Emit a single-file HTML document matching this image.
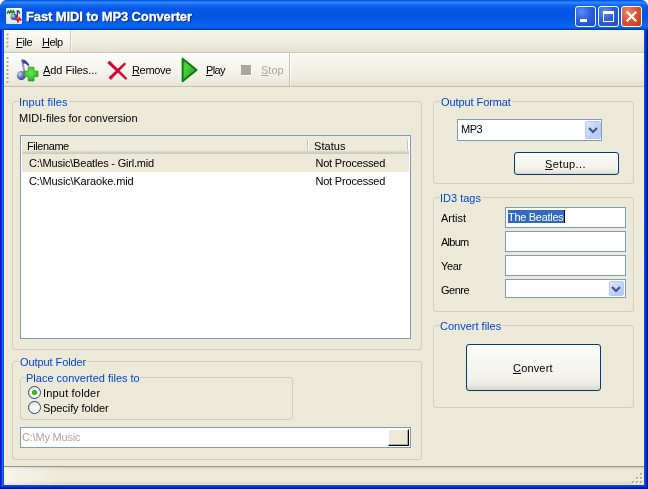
<!DOCTYPE html>
<html>
<head>
<meta charset="utf-8">
<style>
html,body{margin:0;padding:0;}
body{width:648px;height:489px;overflow:hidden;background:#fff;font-family:"Liberation Sans",sans-serif;font-size:11px;color:#000;position:relative;}
.abs{position:absolute;}
#win{position:absolute;left:0;top:0;width:648px;height:489px;background:#0A3FE0;overflow:hidden;border-radius:7px 7px 0 0;}
#title{position:absolute;left:0;top:0;width:648px;height:30px;
 background:linear-gradient(to bottom,#0855DD 0%,#0A5CE8 3%,#2E8AFC 7%,#2A84F8 10%,#1268EE 17%,#0659E6 27%,#0456E2 40%,#0456E2 58%,#065BE8 70%,#0964F2 84%,#0A64F2 92%,#0548CC 96%,#0238B0 100%);
 border-radius:7px 7px 0 0;}
#titletext{position:absolute;left:27px;top:9px;color:#fff;font-weight:bold;font-size:13px;line-height:16px;white-space:nowrap;text-shadow:1px 1px 0 #0A1F80;-webkit-text-stroke:0.3px #fff;letter-spacing:-0.120px;margin-left:-1px;}
#client{position:absolute;left:4px;top:30px;width:640px;height:455px;background:#ECE9D8;}
.tbtn{position:absolute;top:6px;width:21px;height:21px;border-radius:3px;border:1px solid #fff;box-sizing:border-box;}
.tb-blue{background:radial-gradient(circle at 30% 25%,#5C8DF2 0%,#2C5FE0 45%,#1E4ACB 100%);}
.tb-red{background:radial-gradient(circle at 30% 25%,#EE8866 0%,#DD5530 45%,#C4381B 100%);}
.t{position:absolute;white-space:nowrap;line-height:13px;font-size:11px;}
#win{will-change:transform;}
u{text-decoration:underline;text-underline-offset:1px;text-decoration-thickness:1px;}
.group{position:absolute;border:1px solid #D0D0BF;border-radius:3px;box-sizing:border-box;}
.glabel{position:absolute;background:#ECE9D8;color:#0046D5;white-space:nowrap;line-height:13px;font-size:11px;box-sizing:border-box;padding-left:2px;overflow:visible;}
.edit{position:absolute;border:1px solid #7F9DB9;background:#fff;box-sizing:border-box;}
.btn{position:absolute;box-sizing:border-box;border:1px solid #003C74;border-radius:3px;background:linear-gradient(to bottom,#FFFFFF 0%,#FAFAF7 12%,#F3F2EC 70%,#ECEAE2 88%,#DAD5CA 100%);}
.cbtn{position:absolute;border-radius:2px;background:linear-gradient(135deg,#DCE6FD 0%,#C6D4FB 45%,#B4C7F7 100%);border:1px solid #B7C8F5;box-sizing:border-box;}
.radio{position:absolute;width:13px;height:13px;border-radius:50%;box-sizing:border-box;border:1px solid #21497C;background:radial-gradient(circle at 65% 65%,#FFFFFF 0%,#F3F3EE 45%,#DCDCD4 100%);}
</style>
</head>
<body>
<div id="win">
 <div id="title">
  <svg class="abs" style="left:6px;top:8px" width="16" height="16" viewBox="0 0 16 16">
   <defs><radialGradient id="ih" cx="35%" cy="35%" r="70%"><stop offset="0" stop-color="#C8CEF0"/><stop offset="0.5" stop-color="#6870A8"/><stop offset="1" stop-color="#2C3470"/></radialGradient>
   <linearGradient id="ib" x1="0" y1="0" x2="0" y2="1"><stop offset="0" stop-color="#FAFBFE"/><stop offset="1" stop-color="#DDE5F2"/></linearGradient></defs>
   <rect x="0" y="0" width="16" height="16" rx="1" fill="url(#ib)"/>
   <path d="M0.8 5.6 L2.4 3 L3.6 5.4 L5 2.4 L6.2 5 L7.4 2.6 L8.8 5.4" stroke="#188A2C" stroke-width="1.5" fill="none" stroke-linejoin="round"/>
   <path d="M11.4 2.4 L11.4 9.4" stroke="#39417E" stroke-width="1.5" fill="none"/>
   <path d="M10.6 2 L12.2 2 C13.2 3 14.2 4 14.4 5.6 L13.6 6 C13.2 5 12.6 4.4 11.6 4.2 Z" fill="#39417E"/>
   <circle cx="7.8" cy="8.8" r="3.3" fill="url(#ih)"/>
   <path d="M9.6 12.4 L10.8 10 L12 14.2 L13.2 9.4 L14.4 12.4 L15.2 10.8" stroke="#D22318" stroke-width="1.4" fill="none" stroke-linejoin="round"/>
  </svg>
  <div id="titletext">Fast MIDI to MP3 Converter</div>
  <div class="tbtn tb-blue" style="left:575px"><div class="abs" style="left:4px;top:12px;width:7px;height:3px;background:#fff"></div></div>
  <div class="tbtn tb-blue" style="left:598px"><div class="abs" style="left:4px;top:4px;width:11px;height:11px;box-sizing:border-box;border:1px solid #fff;border-top:3px solid #fff"></div></div>
  <div class="tbtn tb-red" style="left:621px">
   <svg class="abs" style="left:0;top:0" width="19" height="19" viewBox="0 0 19 19"><path d="M5.5 5.5 L13.5 13.5 M13.5 5.5 L5.5 13.5" stroke="#fff" stroke-width="2.2" stroke-linecap="square"/></svg>
  </div>
 </div>

 <div id="client">
  <!-- menu bar -->
  <div class="abs" style="left:0;top:0;width:640px;height:22px;background:linear-gradient(to bottom,#F5F4EB 0%,#F0EEE2 45%,#EAE7D8 80%,#E3E0CE 100%);"></div>
  <div class="abs" style="left:0;top:22px;width:640px;height:1px;background:#CDCAB9;"></div>
  <div class="abs" style="left:0;top:0;width:66px;height:22px;background:linear-gradient(to bottom,#FCFCFA 0%,#F6F5EE 45%,#EDEBDF 85%,#E6E3D3 100%);border-right:1px solid #CFCCBB;"></div>
  <div class="abs" style="left:67px;top:0;width:1px;height:22px;background:rgba(255,255,255,0.6);"></div>
  <svg class="abs" style="left:2px;top:3px" width="4" height="18"><g fill="#fff"><rect x="2" y="2" width="1" height="1"/><rect x="2" y="6" width="1" height="1"/><rect x="2" y="10" width="1" height="1"/><rect x="2" y="14" width="1" height="1"/></g><g fill="#ADA996"><rect x="0.5" y="0.5" width="2" height="2"/><rect x="0.5" y="4.5" width="2" height="2"/><rect x="0.5" y="8.5" width="2" height="2"/><rect x="0.5" y="12.5" width="2" height="2"/></g></svg>

  <!-- toolbar -->
  <div class="abs" style="left:0;top:23px;width:640px;height:33px;background:linear-gradient(to bottom,#F8F7F1 0%,#F3F2E9 40%,#ECEADD 80%,#E4E1CF 100%);"></div>
  <div class="abs" style="left:0;top:56px;width:640px;height:1px;background:#C3C0AE;"></div>
  <div class="abs" style="left:0;top:23px;width:285px;height:33px;background:linear-gradient(to bottom,#FDFDFB 0%,#F7F6F0 40%,#EFEDE2 80%,#E7E4D4 100%);border-right:1px solid #C8C5B4;"></div>
  <div class="abs" style="left:286px;top:23px;width:1px;height:33px;background:rgba(255,255,255,0.6);"></div>
  <svg class="abs" style="left:2px;top:27px" width="4" height="28"><g fill="#fff"><rect x="2" y="1.5" width="1" height="1"/><rect x="2" y="5.5" width="1" height="1"/><rect x="2" y="9.5" width="1" height="1"/><rect x="2" y="13.5" width="1" height="1"/><rect x="2" y="17.5" width="1" height="1"/><rect x="2" y="21.5" width="1" height="1"/><rect x="2" y="25.5" width="1" height="1"/></g><g fill="#ADA996"><rect x="0.5" y="0" width="2" height="2"/><rect x="0.5" y="4" width="2" height="2"/><rect x="0.5" y="8" width="2" height="2"/><rect x="0.5" y="12" width="2" height="2"/><rect x="0.5" y="16" width="2" height="2"/><rect x="0.5" y="20" width="2" height="2"/><rect x="0.5" y="24" width="2" height="2"/></g></svg>

  <!-- add-files icon: svg origin abs (16,57) -->
  <svg class="abs" style="left:12px;top:27px" width="24" height="26" viewBox="0 0 24 26">
   <defs>
    <radialGradient id="nh" cx="32%" cy="32%" r="75%"><stop offset="0" stop-color="#D4D8FA"/><stop offset="0.4" stop-color="#8088D0"/><stop offset="0.8" stop-color="#4A50A0"/><stop offset="1" stop-color="#383C80"/></radialGradient>
    <radialGradient id="pl" cx="45%" cy="40%" r="65%"><stop offset="0" stop-color="#6AE650"/><stop offset="0.6" stop-color="#44C832"/><stop offset="1" stop-color="#249A1C"/></radialGradient>
   </defs>
   <path d="M6.2 3 C7 8 7.6 11 8.6 16" stroke="#9094DC" stroke-width="2" fill="none"/>
   <path d="M5.3 2.4 L8.6 2.8 C11 4.5 12.5 6 13.2 8 L12.4 9.8 C11.5 8 10.5 7 8.2 6.4 L7 6.6 Z" fill="#4448A0"/>
   <ellipse cx="5.3" cy="18.6" rx="4.5" ry="4.6" fill="url(#nh)"/>
   <path d="M12.3 10.2 h5.7 v4 h4 v5.4 h-4 v4.3 h-5.7 v-4.3 h-4 v-5.4 h4 z" fill="url(#pl)" stroke="#2A9A20" stroke-width="0.8" stroke-linejoin="round"/>
  </svg>
  <!-- remove icon: svg origin abs (104,58) -->
  <svg class="abs" style="left:101px;top:28px" width="26" height="24" viewBox="0 0 26 24">
   <path d="M2.64 5.01 L4.57 2.99 L21.95 20.32 L20.85 21.48 Z" fill="#D4002E" stroke="#D4002E" stroke-width="0.7" stroke-linejoin="round"/>
   <path d="M20.65 5.98 L19.55 4.82 L3.94 19.58 L5.86 21.62 Z" fill="#D4002E" stroke="#D4002E" stroke-width="0.7" stroke-linejoin="round"/>
  </svg>
  <!-- play icon: svg origin abs (180,56) -->
  <svg class="abs" style="left:176px;top:26px" width="20" height="28" viewBox="0 0 20 28">
   <defs><linearGradient id="pg" x1="0" y1="0" x2="1" y2="1"><stop offset="0" stop-color="#34AE2C"/><stop offset="0.3" stop-color="#54D444"/><stop offset="0.6" stop-color="#38B42E"/><stop offset="1" stop-color="#1E921C"/></linearGradient></defs>
   <path d="M2.6 2.8 L16.6 14 L2.6 25.2 Z" fill="url(#pg)" stroke="#0C7A0E" stroke-width="1.9" stroke-linejoin="round"/>
  </svg>
  <!-- stop icon (abs 241..251, 65..75) -->
  <div class="abs" style="left:238px;top:36px;width:10px;height:10px;background:#fff"></div>
  <div class="abs" style="left:237px;top:35px;width:10px;height:10px;background:#ACA899"></div>

  <!-- groups -->
  <div class="group" style="left:8px;top:71px;width:410px;height:249px"></div>
  <div class="group" style="left:8px;top:331px;width:410px;height:99px"></div>
  <div class="group" style="left:16px;top:347px;width:273px;height:43px"></div>
  <div class="group" style="left:429px;top:71px;width:201px;height:83px"></div>
  <div class="group" style="left:429px;top:167px;width:201px;height:115px"></div>
  <div class="group" style="left:429px;top:295px;width:201px;height:83px"></div>
  <div class="glabel" style="left:15px;top:66px;width:49.5px;padding-left:0px"><span id="g_in" style="letter-spacing:0.150px">Input files</span></div>
  <div class="glabel" style="left:436px;top:66px;width:72px;padding-left:1px"><span id="g_of" style="letter-spacing:-0.083px">Output Format</span></div>
  <div class="glabel" style="left:436px;top:162px;width:42px;padding-left:0px"><span id="g_id3" style="letter-spacing:0.000px">ID3 tags</span></div>
  <div class="glabel" style="left:436px;top:290px;width:62px;padding-left:0px"><span id="g_cf" style="letter-spacing:0.000px">Convert files</span></div>
  <div class="glabel" style="left:15px;top:326px;width:68px;padding-left:1px"><span id="g_out" style="letter-spacing:-0.083px">Output Folder</span></div>
  <div class="glabel" style="left:22px;top:342px;width:114px;padding-left:0px"><span id="g_pl" style="letter-spacing:0.000px">Place converted files to</span></div>

  <!-- list view -->
  <div class="edit" style="left:16px;top:105px;width:391px;height:204px"></div>
  <div class="abs" style="left:18px;top:106px;width:387px;height:18px;background:linear-gradient(to bottom,#EBEADB 0%,#EBEADB 78%,#E2DECD 84%,#D6D2C2 90%,#CBC7B8 100%);"></div>
  <div class="abs" style="left:303px;top:110px;width:1px;height:10px;background:#C7C5B2;border-right:1px solid #fff"></div>
  <div class="abs" style="left:403px;top:110px;width:1px;height:10px;background:#C7C5B2;border-right:1px solid #fff"></div>
  <div class="abs" style="left:18px;top:124px;width:387px;height:18px;background:#ECE9D8;"></div>

  <!-- output format -->
  <div class="edit" style="left:453px;top:89px;width:145px;height:22px"></div>
  <div class="cbtn" style="left:581px;top:91px;width:16px;height:18px"><svg class="abs" style="left:2px;top:4px" width="10" height="8" viewBox="0 0 10 8"><path d="M1 2 L5 6 L9 2" stroke="#46557F" stroke-width="2.1" fill="none"/></svg></div>
  <div class="btn" style="left:510px;top:122px;width:105px;height:23px"></div>

  <!-- id3 -->
  <div class="edit" style="left:501px;top:177px;width:121px;height:21px"></div>
  <div class="abs" style="left:504px;top:180px;width:56px;height:13px;background:#316AC5"></div>
  <div class="abs" style="left:560px;top:180px;width:1px;height:13px;background:#000"></div>
  <div class="edit" style="left:501px;top:201px;width:121px;height:21px"></div>
  <div class="edit" style="left:501px;top:225px;width:121px;height:21px"></div>
  <div class="edit" style="left:501px;top:249px;width:121px;height:19px"></div>
  <div class="cbtn" style="left:605px;top:251px;width:15px;height:15px"><svg class="abs" style="left:1px;top:3px" width="10" height="8" viewBox="0 0 10 8"><path d="M1 2 L5 6 L9 2" stroke="#46557F" stroke-width="2.1" fill="none"/></svg></div>

  <!-- convert -->
  <div class="btn" style="left:462px;top:314px;width:135px;height:47px"></div>

  <!-- radios -->
  <div class="radio" style="left:24px;top:356px"><div class="abs" style="left:3px;top:3px;width:5px;height:5px;border-radius:50%;background:radial-gradient(circle at 45% 45%,#3CC03C 0%,#22A422 55%,#4CC24C 100%)"></div></div>
  <div class="radio" style="left:24px;top:371px"></div>

  <!-- path edit -->
  <div class="edit" style="left:16px;top:397px;width:391px;height:21px"></div>
  <div class="abs" style="left:384px;top:399px;width:21px;height:17px;box-sizing:border-box;background:#ECE9D8;border-top:1px solid #fff;border-left:1px solid #fff;border-right:1px solid #000;border-bottom:1px solid #000;box-shadow:inset -1px -1px 0 #ACA899;"></div>

  <!-- status bar -->
  <div class="abs" style="left:0;top:436px;width:640px;height:19px;background:linear-gradient(to bottom,#9A9786 0px,#9A9786 1px,#C8C5B3 1px,#DBD8C6 2px,#E7E4D3 3px,#ECE9D8 5px,#ECE9D8 14px,#E2DECB 17px,#D2CEBA 19px);"></div>
  <div class="abs" style="left:0;top:437px;width:60px;height:17px;background:linear-gradient(to right,rgba(255,255,255,0.55),rgba(255,255,255,0));"></div>
  <svg class="abs" style="left:627px;top:442px" width="13" height="13" viewBox="0 0 13 13">
   <g fill="#fff"><rect x="10" y="2" width="2" height="2"/><rect x="6" y="6" width="2" height="2"/><rect x="10" y="6" width="2" height="2"/><rect x="2" y="10" width="2" height="2"/><rect x="6" y="10" width="2" height="2"/><rect x="10" y="10" width="2" height="2"/></g>
   <g fill="#B8B4A2"><rect x="9" y="1" width="2" height="2"/><rect x="5" y="5" width="2" height="2"/><rect x="9" y="5" width="2" height="2"/><rect x="1" y="9" width="2" height="2"/><rect x="5" y="9" width="2" height="2"/><rect x="9" y="9" width="2" height="2"/></g>
  </svg>

  <div id="m_file" class="t" style="left:12px;top:6px;letter-spacing:-0.333px;"><u>F</u>ile</div>
  <div id="m_help" class="t" style="left:38px;top:6px;letter-spacing:-0.500px;"><u>H</u>elp</div>
  <div id="t_add" class="t" style="left:39px;top:34px;letter-spacing:-0.064px;"><u>A</u>dd Files...</div>
  <div id="t_rem" class="t" style="left:128px;top:34px;letter-spacing:-0.340px;"><u>R</u>emove</div>
  <div id="t_play" class="t" style="left:202px;top:34px;letter-spacing:-0.600px;"><u>P</u>lay</div>
  <div id="t_stop" class="t" style="left:257px;top:34px;letter-spacing:0.000px;color:#ACA899;"><u>S</u>top</div>
  <div id="l_midi" class="t" style="left:15px;top:82px;letter-spacing:0.000px;">MIDI-files for conversion</div>
  <div id="h_file" class="t" style="left:23px;top:110px;letter-spacing:-0.429px;">Filename</div>
  <div id="h_stat" class="t" style="left:310px;top:110px;letter-spacing:0.060px;">Status</div>
  <div id="r1a" class="t" style="left:25px;top:127px;letter-spacing:-0.192px;">C:\Music\Beatles - Girl.mid</div>
  <div id="r1b" class="t" style="left:311.4px;top:127px;letter-spacing:-0.183px;">Not Processed</div>
  <div id="r2a" class="t" style="left:25px;top:145px;letter-spacing:-0.158px;">C:\Music\Karaoke.mid</div>
  <div id="r2b" class="t" style="left:311.4px;top:145px;letter-spacing:-0.183px;">Not Processed</div>
  <div id="c_mp3" class="t" style="left:457px;top:93px;letter-spacing:-0.500px;">MP3</div>
  <div id="b_setup" class="t" style="left:541px;top:128px;letter-spacing:0.371px;"><u>S</u>etup...</div>
  <div id="l_artist" class="t" style="left:437px;top:182px;letter-spacing:0.000px;">Artist</div>
  <div id="l_album" class="t" style="left:437px;top:206px;letter-spacing:-0.750px;">Album</div>
  <div id="l_year" class="t" style="left:437px;top:230px;letter-spacing:-0.333px;">Year</div>
  <div id="l_genre" class="t" style="left:437px;top:254px;letter-spacing:-0.500px;">Genre</div>
  <div id="e_beat" class="t" style="left:504px;top:181px;letter-spacing:-0.300px;color:#fff;">The Beatles</div>
  <div id="b_conv" class="t" style="left:509px;top:332px;letter-spacing:0.167px;"><u>C</u>onvert</div>
  <div id="r_in" class="t" style="left:39px;top:357px;letter-spacing:0.182px;">Input folder</div>
  <div id="r_sp" class="t" style="left:39px;top:372px;letter-spacing:-0.077px;">Specify folder</div>
  <div id="e_path" class="t" style="left:18px;top:401px;letter-spacing:-0.200px;color:#ACA899;">C:\My Music</div>
 </div>

 <!-- borders -->
 <div class="abs" style="left:0;top:30px;width:1px;height:459px;background:#0019CF"></div>
 <div class="abs" style="left:1px;top:30px;width:1px;height:459px;background:#0A30D8"></div>
 <div class="abs" style="left:2px;top:30px;width:1px;height:456px;background:#166AEE"></div>
 <div class="abs" style="left:3px;top:30px;width:1px;height:455px;background:#0850DC"></div>
 <div class="abs" style="left:4px;top:87px;width:1px;height:379px;background:#F5EFDB"></div>
 <div class="abs" style="left:643px;top:87px;width:1px;height:379px;background:#F5EFDB"></div>
 <div class="abs" style="left:644px;top:30px;width:1px;height:455px;background:#0A4AE8"></div>
 <div class="abs" style="left:645px;top:30px;width:1px;height:456px;background:#003FE0"></div>
 <div class="abs" style="left:646px;top:30px;width:1px;height:459px;background:#0028B8"></div>
 <div class="abs" style="left:647px;top:30px;width:1px;height:459px;background:#00148C"></div>
 <div class="abs" style="left:4px;top:484px;width:640px;height:1px;background:#EFE8CF"></div>
 <div class="abs" style="left:3px;top:485px;width:642px;height:1px;background:#0A48E8"></div>
 <div class="abs" style="left:2px;top:486px;width:644px;height:1px;background:#003CE0"></div>
 <div class="abs" style="left:1px;top:487px;width:646px;height:1px;background:#0024B0"></div>
 <div class="abs" style="left:0;top:488px;width:648px;height:1px;background:#00148C"></div>
</div>
</body>
</html>
